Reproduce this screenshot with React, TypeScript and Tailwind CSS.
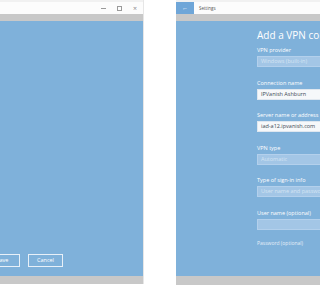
import React from 'react';

const font = { fontFamily: '"Open Sans", "Noto Sans", sans-serif' };

type Field = { label: string; value?: string; kind: 'disabled' | 'active' | 'empty' };

const fields: Field[] = [
  { label: 'VPN provider', value: 'Windows (built-in)', kind: 'disabled' },
  { label: 'Connection name', value: 'IPVanish Ashburn', kind: 'active' },
  { label: 'Server name or address', value: 'iad-a12.ipvanish.com', kind: 'active' },
  { label: 'VPN type', value: 'Automatic', kind: 'disabled' },
  { label: 'Type of sign-in info', value: 'User name and password', kind: 'disabled' },
  { label: 'User name (optional)', kind: 'empty' },
];

function FieldRow({ f }: { f: Field }) {
  const box =
    f.kind === 'active'
      ? 'bg-[#f6f8fa] border-[#dfe7ef] text-[#3d4a55]'
      : 'bg-[#a3c6e6] border-[#b3d0ec] text-[#d4e4f3]';
  return (
    <div className="mb-[12.5px]">
      <div className="h-[7px] mb-[2px] text-[5.5px] leading-[7px] text-white whitespace-nowrap">{f.label}</div>
      <div className={`h-[11px] w-[120px] border px-[3px] text-[5.5px] leading-[9px] whitespace-nowrap ${box}`}>
        {f.value}
      </div>
    </div>
  );
}

export default function App() {
  return (
    <div className="w-[320px] h-[286px] bg-white flex overflow-hidden" style={font}>
      {/* left window */}
      <div className="w-[144px] h-[284px] flex flex-col border-r border-[#e6e6e6] shrink-0">
        <div className="h-[14px] bg-[#fcfcfc] border-t-2 border-[#f1f1f1] flex items-center justify-end pr-[6px] gap-[11px] text-[#8a8a8a]">
          <span className="w-[5px] h-px bg-[#9a9a9a]" />
          <span className="w-[5px] h-[5px] border border-[#9a9a9a]" />
          <span className="text-[7px] leading-none">×</span>
        </div>
        <div className="h-[7px] bg-[#c8c8c8]" />
        <div className="flex-1 bg-[#7fb1da] flex flex-col justify-end pb-[9px]">
          <div className="flex gap-[8px] ml-[-15px]">
            <div className="w-[35px] h-[13px] border border-[#e8f0f8] text-white text-[5.5px] leading-[11px] text-center">Save</div>
            <div className="w-[35px] h-[13px] border border-[#e8f0f8] text-white text-[5.5px] leading-[11px] text-center">Cancel</div>
          </div>
        </div>
        <div className="h-[8px] bg-[#c8c8c8]" />
      </div>

      <div className="w-[32px] shrink-0" />

      {/* right window */}
      <div className="w-[160px] h-[285px] flex flex-col shrink-0">
        <div className="h-[14px] bg-[#fcfcfc] border-t-2 border-[#f1f1f1] flex items-center">
          <div className="w-[18px] h-full bg-[#6fa6d8] flex items-center justify-center text-white text-[6px] leading-none">←</div>
          <span className="ml-[5px] text-[4.5px] text-[#555]">Settings</span>
        </div>
        <div className="h-[7px] bg-[#c8c8c8]" />
        <div className="flex-1 bg-[#7fb1da] pl-[81px] pt-[7px] overflow-hidden">
          <div className="text-[10px] leading-[14px] text-white whitespace-nowrap mb-[5px]">Add a VPN connection</div>
          {fields.map((f) => (
            <FieldRow key={f.label} f={f} />
          ))}
          <div className="h-[7px] mt-[-2px] text-[5px] leading-[7px] text-[#e4eef8] whitespace-nowrap">Password (optional)</div>
        </div>
        <div className="h-[9px] bg-[#c8c8c8]" />
      </div>
    </div>
  );
}
